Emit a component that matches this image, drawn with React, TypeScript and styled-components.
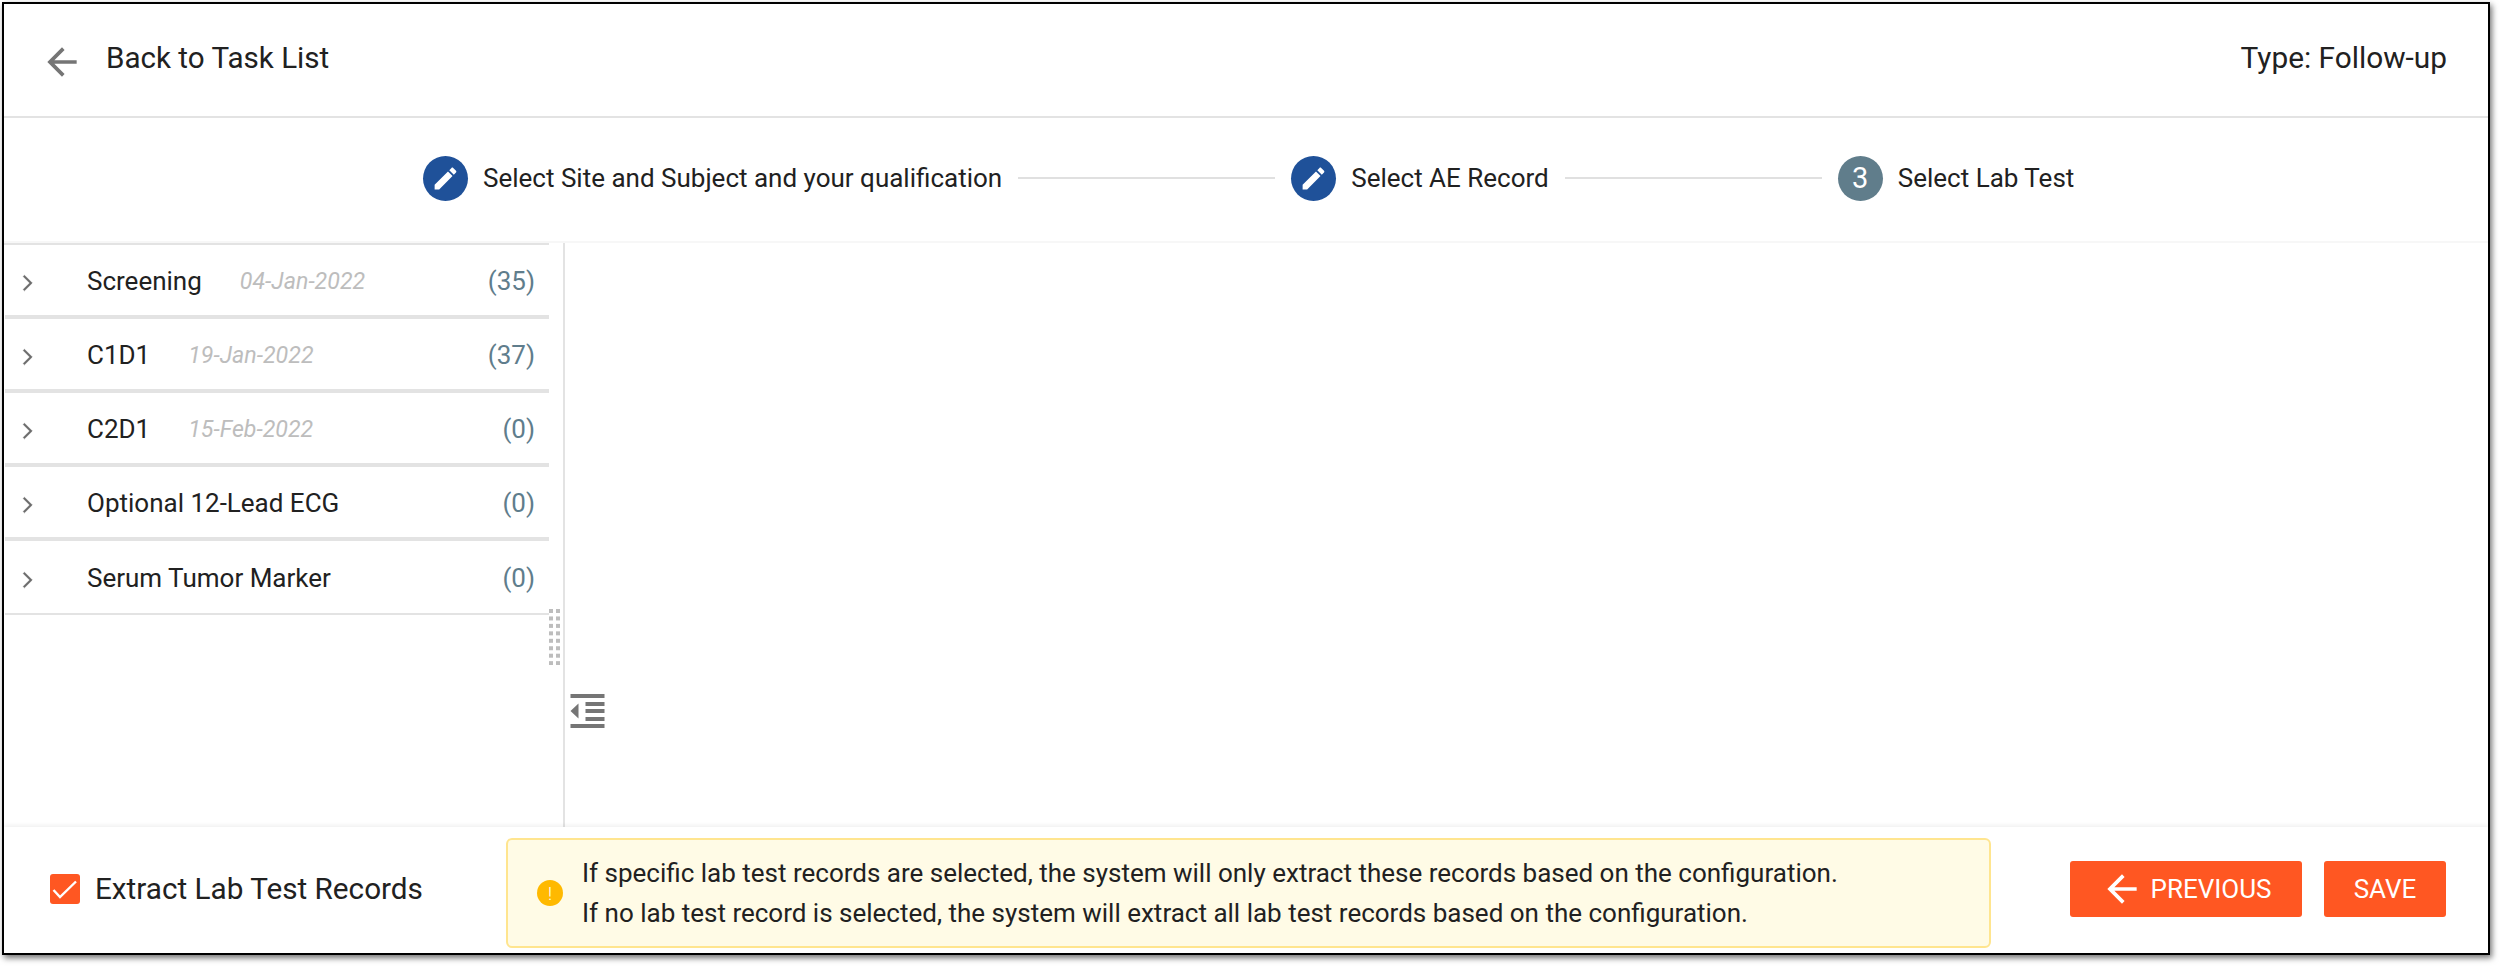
import React from "react";
import styled, { createGlobalStyle } from "styled-components";

const Global = createGlobalStyle`
  html, body { margin: 0; padding: 0; background: #fff; }
  * { box-sizing: border-box; }
  #root { font-family: Roboto, "Liberation Sans", sans-serif; color: #212121; }
`;

const Page = styled.div`
  padding: 2px 0 0 2px;
  width: 2500px;
  height: 966px;
  background: #fff;
`;
const Frame = styled.div`
  width: 2488px;
  height: 953px;
  border: 2px solid #000;
  box-shadow: 2px 3px 6px rgba(0, 0, 0, 0.55);
  display: flex;
  flex-direction: column;
  background: #fff;
`;
const Header = styled.header`
  height: 114px;
  flex: none;
  border-bottom: 2px solid #e3e3e3;
  display: flex;
  align-items: center;
  justify-content: space-between;
  padding: 0 41px 4px 43px;
`;
const BackLink = styled.div`
  display: flex;
  align-items: center;
  gap: 22px;
  font-size: 29.6px;
  line-height: 32px;
`;
const BackIcon = styled.svg`
  width: 44px;
  height: 44px;
  margin-top: 7px;
  margin-left: -7px;
  fill: #757575;
  flex: none;
`;
const TypeLabel = styled.div`
  font-size: 29.8px;
  line-height: 32px;
`;
const Stepper = styled.nav`
  height: 125px;
  flex: none;
  border-bottom: 2px solid #f7f7f7;
  display: flex;
  align-items: center;
  padding: 0 0 3px 419px;
`;
const StepDot = styled.span<{ $bg: string }>`
  width: 45px;
  height: 45px;
  border-radius: 50%;
  background: ${(p) => p.$bg};
  color: #fff;
  font-size: 29px;
  display: flex;
  align-items: center;
  justify-content: center;
  flex: none;
`;
const PenIcon = styled.svg`
  width: 29px;
  height: 29px;
  fill: #fff;
`;
const StepLabel = styled.span`
  margin-left: 15px;
  font-size: 26px;
  line-height: 32px;
  white-space: nowrap;
`;
const StepLine = styled.span<{ $w: number }>`
  width: ${(p) => p.$w}px;
  height: 2px;
  background: #e0e0e0;
  margin: 0 16px;
  flex: none;
`;
const Main = styled.main`
  flex: 1;
  min-height: 0;
  display: flex;
`;
const Side = styled.aside`
  width: 545px;
  flex: none;
  display: flex;
  flex-direction: column;
  border-top: 2px solid #e3e3e3;
  padding-left: 1px;
`;
const Row = styled.div<{ $last?: boolean }>`
  height: 74px;
  flex: none;
  display: flex;
  align-items: center;
  border-bottom: ${(p) => (p.$last ? "2px solid #e3e3e3" : "4px solid #e3e3e3")};
  padding: 2px 14px 0 17px;
`;
const Chevron = styled.svg`
  width: 34px;
  height: 34px;
  margin-left: -11px;
  margin-top: 3px;
  fill: #6b6b6b;
  stroke: #6b6b6b;
  stroke-width: 0.35;
  flex: none;
`;
const RowName = styled.span`
  margin-left: 42px;
  font-size: 26px;
  line-height: 32px;
`;
const RowDate = styled.span`
  margin-left: 38px;
  font-size: 23.2px;
  font-style: italic;
  color: #bdbdbd;
`;
const RowCount = styled.span`
  margin-left: auto;
  font-size: 26px;
  color: #5f7d8c;
`;
const Splitter = styled.div`
  width: 14px;
  flex: none;
  position: relative;
`;
const GripDots = styled.svg`
  position: absolute;
  top: 366px;
  left: 0;
  width: 11px;
  height: 56px;
  fill: #bdbdbd;
`;
const Content = styled.section`
  flex: 1;
  border-left: 2px solid #e3e3e3;
  padding: 451px 0 0 5px;
`;
const IndentIcon = styled.svg`
  display: block;
  width: 35px;
  height: 34px;
  fill: #757575;
`;
const Footer = styled.footer`
  flex: none;
  height: 126px;
  display: flex;
  align-items: center;
  padding: 6px 42px 0 46px;
  box-shadow: 0 -2px 4px rgba(0, 0, 0, 0.06);
  position: relative;
`;
const CheckField = styled.label`
  width: 456px;
  flex: none;
  display: flex;
  align-items: center;
  gap: 15px;
  font-size: 29.7px;
  margin-top: -9px;
`;
const CheckBox = styled.span`
  width: 30px;
  height: 30px;
  border-radius: 3px;
  background: #ff5722;
  display: flex;
  align-items: center;
  justify-content: center;
  flex: none;
`;
const CheckMark = styled.svg`
  width: 30px;
  height: 30px;
  fill: none;
  stroke: #fff;
  stroke-width: 2.4;
`;
const Notice = styled.div`
  width: 1485px;
  height: 110px;
  flex: none;
  background: #fffbe6;
  border: 2px solid #ffe58f;
  border-radius: 6px;
  display: flex;
  align-items: center;
  padding: 0 0 0 29px;
  gap: 19px;
`;
const NoticeIcon = styled.span`
  width: 26px;
  height: 26px;
  border-radius: 50%;
  background: #ffb900;
  color: #fff;
  font-size: 18px;
  font-weight: 300;
  display: flex;
  align-items: center;
  justify-content: center;
  flex: none;
`;
const NoticeText = styled.div`
  font-size: 26px;
  line-height: 40px;
  white-space: nowrap;
`;
const Actions = styled.div`
  margin-left: auto;
  display: flex;
  gap: 22px;
  margin-top: -9px;
`;
const ActionButton = styled.button<{ $w: number }>`
  width: ${(p) => p.$w}px;
  height: 56px;
  border: 0;
  border-radius: 3px;
  background: #ff5722;
  color: #fff;
  font: 400 26px Roboto, "Liberation Sans", sans-serif;
  display: flex;
  align-items: center;
  justify-content: center;
  gap: 6px;
  padding: 0;
`;
const ButtonArrow = styled.svg`
  width: 44px;
  height: 44px;
  fill: #fff;
  flex: none;
`;

const arrow = "M20 11H7.83l5.59-5.59L12 4l-8 8 8 8 1.41-1.41L7.83 13H20v-2z";
const pen =
  "M3 17.25V21h3.75L17.81 9.94l-3.75-3.75L3 17.25zM20.71 7.04c.39-.39.39-1.02 0-1.41l-2.34-2.34c-.39-.39-1.02-.39-1.41 0l-1.83 1.83 3.75 3.75 1.83-1.83z";

const rows = [
  { name: "Screening", date: "04-Jan-2022", count: 35 },
  { name: "C1D1", date: "19-Jan-2022", count: 37 },
  { name: "C2D1", date: "15-Feb-2022", count: 0 },
  { name: "Optional 12-Lead ECG", count: 0 },
  { name: "Serum Tumor Marker", count: 0 },
];

const Pen = () => (
  <PenIcon viewBox="0 0 24 24">
    <path d={pen} />
  </PenIcon>
);

export default function App() {
  return (
    <Page>
      <Global />
      <Frame>
        <Header>
          <BackLink>
            <BackIcon viewBox="0 0 24 24">
              <path d={arrow} />
            </BackIcon>
            Back to Task List
          </BackLink>
          <TypeLabel>Type: Follow-up</TypeLabel>
        </Header>
        <Stepper>
          <StepDot $bg="#1f5199">
            <Pen />
          </StepDot>
          <StepLabel>Select Site and Subject and your qualification</StepLabel>
          <StepLine $w={257} />
          <StepDot $bg="#1f5199">
            <Pen />
          </StepDot>
          <StepLabel>Select AE Record</StepLabel>
          <StepLine $w={257} />
          <StepDot $bg="#607d8b">3</StepDot>
          <StepLabel>Select Lab Test</StepLabel>
        </Stepper>
        <Main>
          <Side>
            {rows.map((r, i) => (
              <Row key={r.name} $last={i === rows.length - 1}>
                <Chevron viewBox="0 0 24 24">
                  <path d="M9.5 6.5 8.6 7.4l4.6 4.6-4.6 4.6.9.9 5.5-5.5z" />
                </Chevron>
                <RowName>{r.name}</RowName>
                {r.date && <RowDate>{r.date}</RowDate>}
                <RowCount>({r.count})</RowCount>
              </Row>
            ))}
          </Side>
          <Splitter>
            <GripDots viewBox="0 0 11 56">
              {Array.from({ length: 8 }).flatMap((_, y) =>
                [0, 7].map((x) => <rect key={`${x}-${y}`} x={x} y={y * 7.45} width="4" height="4" />)
              )}
            </GripDots>
          </Splitter>
          <Content>
            <IndentIcon viewBox="0 0 34 34">
              <rect x="0" y="0" width="34" height="4" />
              <rect x="15" y="8" width="19" height="4" />
              <rect x="15" y="15" width="19" height="4" />
              <rect x="15" y="23" width="19" height="4" />
              <rect x="0" y="30" width="34" height="4" />
              <path d="M8 9.5v15L0 17z" />
            </IndentIcon>
          </Content>
        </Main>
        <Footer>
          <CheckField>
            <CheckBox>
              <CheckMark viewBox="0 0 30 30">
                <path d="M3.5 16 10 23 26 7.5" />
              </CheckMark>
            </CheckBox>
            Extract Lab Test Records
          </CheckField>
          <Notice>
            <NoticeIcon>!</NoticeIcon>
            <NoticeText>
              If specific lab test records are selected, the system will only extract these records based on the
              configuration.
              <br />
              If no lab test record is selected, the system will extract all lab test records based on the
              configuration.
            </NoticeText>
          </Notice>
          <Actions>
            <ActionButton $w={232}>
              <ButtonArrow viewBox="0 0 24 24">
                <path d={arrow} />
              </ButtonArrow>
              PREVIOUS
            </ActionButton>
            <ActionButton $w={122}>SAVE</ActionButton>
          </Actions>
        </Footer>
      </Frame>
    </Page>
  );
}
